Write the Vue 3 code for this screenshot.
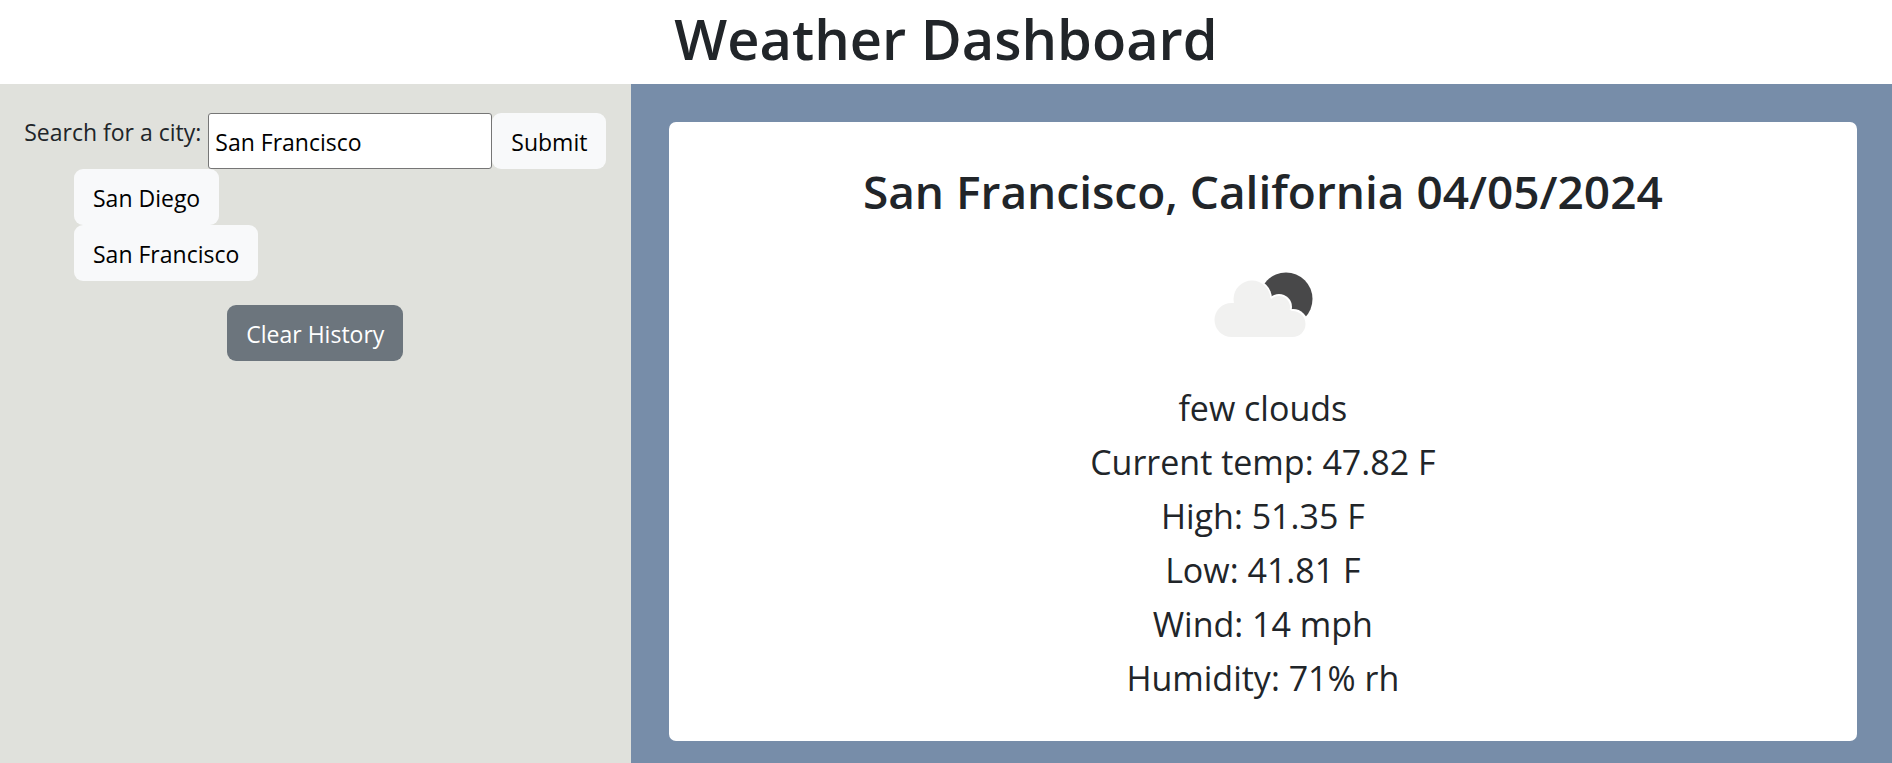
<script setup>
import { ref } from 'vue'

const city = ref('San Francisco')
const history = ref(['San Diego', 'San Francisco'])
const readings = [
  'few clouds',
  'Current temp: 47.82 F',
  'High: 51.35 F',
  'Low: 41.81 F',
  'Wind: 14 mph',
  'Humidity: 71% rh',
]

function search() {
  const name = city.value.trim()
  if (name && !history.value.includes(name)) history.value.push(name)
}
</script>

<template>
  <div class="page">
    <header class="header">
      <h1>Weather Dashboard</h1>
    </header>
    <div class="content">
      <aside class="sidebar">
        <form class="search" @submit.prevent="search">
          <label for="city">Search for a city:</label>
          <input id="city" v-model="city" type="text" />
          <button class="btn light" type="submit">Submit</button>
        </form>
        <ul class="history">
          <li v-for="name in history" :key="name">
            <button class="btn light" type="button" @click="city = name">{{ name }}</button>
          </li>
        </ul>
        <button class="btn secondary" type="button" @click="history = []">Clear History</button>
      </aside>
      <main class="main">
        <section class="card">
          <h2>San Francisco, California 04/05/2024</h2>
          <svg class="icon" viewBox="0 0 150 126" role="img" aria-label="few clouds">
            <circle cx="98" cy="61" r="26.5" fill="#484849" />
            <g fill="#fff">
              <circle cx="64" cy="61" r="20" />
              <circle cx="91" cy="69" r="13" />
              <circle cx="105" cy="86" r="15" />
            </g>
            <g fill="#f1f1f0">
              <circle cx="43.500" cy="82" r="17" />
              <circle cx="64" cy="61" r="18.500" />
              <circle cx="91" cy="69" r="11" />
              <circle cx="104.500" cy="86" r="13" />
              <path d="M43 65H46L64 55L82 60L104 73V99H43Z" />
            </g>
          </svg>
          <ul class="readings">
            <li v-for="line in readings" :key="line">{{ line }}</li>
          </ul>
        </section>
      </main>
    </div>
  </div>
</template>

<style>
body {
  margin: 0;
}
</style>

<style scoped>
.page {
  display: flex;
  flex-direction: column;
  min-height: 100vh;
  font-family: "Open Sans", "Noto Sans", sans-serif;
  font-size: 23px;
  line-height: 36px;
  color: #212529;
  background: #fff;
}
h1,
h2,
ul {
  margin: 0;
  padding: 0;
}
ul {
  list-style: none;
}
.header {
  padding: 2px 0 10px;
  text-align: center;
}
h1 {
  font-size: 56px;
  font-weight: 600;
  line-height: 72px;
}
.content {
  flex: 1;
  display: grid;
  grid-template-columns: 1fr 2fr;
}
.sidebar {
  display: flex;
  flex-direction: column;
  align-items: center;
  padding: 29px 24px;
  background: #e0e1dc;
}
.search {
  display: flex;
  align-items: flex-start;
}
label {
  margin-right: 7px;
  line-height: 38px;
  white-space: nowrap;
}
input {
  box-sizing: border-box;
  width: 284px;
  min-width: 0;
  height: 56px;
  padding: 4px 6px 2px;
  border: 1px solid #767676;
  border-radius: 3px;
  font: inherit;
  color: #000;
  background: #fff;
}
.btn {
  display: block;
  padding: 11px 19px 9px;
  border: 0;
  border-radius: 9px;
  font: inherit;
  white-space: nowrap;
}
.light {
  color: #000;
  background: #f8f9fa;
}
.secondary {
  color: #fff;
  background: #6c757d;
}
.history {
  align-self: stretch;
  margin: 0 0 24px;
  padding-left: 50px;
}
.main {
  padding: 38px 35px 22px 38px;
  background: #778da9;
}
.card {
  display: flex;
  flex-direction: column;
  align-items: center;
  padding: 40px 36px 36px;
  border-radius: 7px;
  background: #fff;
  text-align: center;
}
h2 {
  font-size: 46px;
  font-weight: 600;
  line-height: 58px;
}
.icon {
  width: 150px;
  height: 126px;
  margin: 18px 0 17px;
}
.readings {
  font-size: 34px;
  line-height: 54px;
}
</style>
